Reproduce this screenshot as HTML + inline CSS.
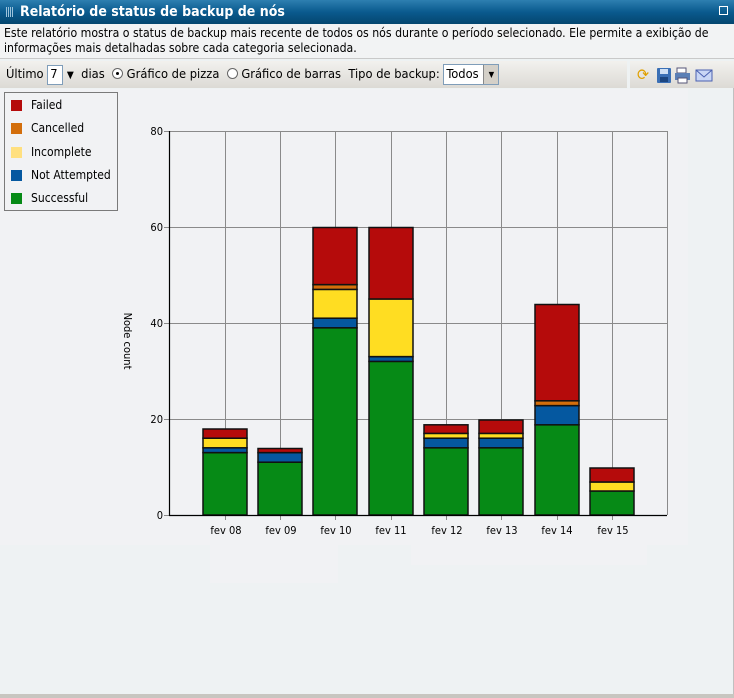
<!DOCTYPE html>
<html><head><meta charset="utf-8"><style>
*{margin:0;padding:0;box-sizing:border-box}
body{width:734px;height:698px;overflow:hidden;background:#eef2f3;font-family:Tahoma,"DejaVu Sans","Liberation Sans",sans-serif;font-size:12px;color:#000;position:relative}
.title{position:absolute;left:0;top:0;width:734px;height:24px;background:linear-gradient(#2d7fb0,#0a5a8e 50%,#04466f);color:#fff;font-weight:bold;font-size:14px;line-height:24px;padding-left:20px;font-family:"DejaVu Sans Condensed","DejaVu Sans",sans-serif}
.desc{position:absolute;left:0;top:24px;width:734px;height:35px;background:#f2f3f4;border-bottom:1px solid #c9c9c9;padding:2px 4px;font-size:12.2px;line-height:15px;font-family:"DejaVu Sans Condensed","DejaVu Sans",sans-serif;white-space:nowrap}
.tb{position:absolute;top:61px;height:27px;background:linear-gradient(#f2f1ee,#dcdad5);font-size:12.8px;font-family:"DejaVu Sans Condensed","DejaVu Sans",sans-serif;line-height:27px;white-space:nowrap}
.chartbg{position:absolute;left:0;top:89px;width:688px;height:456px;background:#f1f2f4}
.legend{position:absolute;left:4px;top:92px;width:114px;height:119px;border:1px solid #7a7a7a;background:#f1f2f4;font-size:12px;font-family:"DejaVu Sans Condensed","DejaVu Sans",sans-serif;padding-top:1px}
.legend div{height:23.25px;line-height:23px;padding-left:26px;position:relative}
.legend span{position:absolute;left:6px;top:6px;width:11px;height:11px}
</style></head><body>
<div class="title"><span style="position:absolute;left:6px;top:7px;width:8px;height:10px;background:repeating-linear-gradient(90deg,#9cc3dc 0 1px,transparent 1px 2px)"></span>Relatório de status de backup de nós
<span style="position:absolute;right:6px;top:6px;width:9px;height:9px;border:1px solid #fff"></span></div>
<div class="desc">Este relatório mostra o status de backup mais recente de todos os nós durante o período selecionado. Ele permite a exibição de<br>informações mais detalhadas sobre cada categoria selecionada.</div>
<div class="tb" style="left:0;width:627px;padding-left:6px">Último <span style="display:inline-block;width:16px;height:20px;border:1px solid #7f9db9;background:#fff;line-height:18px;vertical-align:middle;padding-left:2px">7</span> <span style="font-size:10px">▼</span>&nbsp; dias &nbsp;<span style="display:inline-block;width:11px;height:11px;border-radius:50%;border:1px solid #666;background:#fff;vertical-align:-1px;position:relative"><span style="position:absolute;left:3px;top:3px;width:3px;height:3px;border-radius:50%;background:#000"></span></span> Gráfico de pizza &nbsp;<span style="display:inline-block;width:11px;height:11px;border-radius:50%;border:1px solid #666;background:#fff;vertical-align:-1px"></span> Gráfico de barras &nbsp;Tipo de backup: <span style="display:inline-block;width:56px;height:21px;border:1px solid #7f9db9;background:#fff;line-height:19px;vertical-align:middle;padding-left:2px;position:relative">Todos<span style="position:absolute;right:0;top:0;width:15px;height:19px;background:#d4d0c8;border-left:1px solid #888;font-size:8px;text-align:center;line-height:19px">▼</span></span></div>
<div class="tb" style="left:630px;width:104px">
<svg width="104" height="27" style="position:absolute;left:0;top:0">
<text x="7" y="19" font-size="16" fill="#e0a000">⟳</text>
<rect x="27" y="7" width="14" height="15" fill="#3a6fb5" rx="1"/><rect x="30" y="8" width="8" height="5" fill="#cfe0f5"/><rect x="30" y="16" width="8" height="5" fill="#1c4680"/>
<rect x="47" y="7" width="9" height="5" fill="#fff" stroke="#557"/><rect x="45" y="12" width="15" height="7" fill="#5b7fb5"/><rect x="48" y="17" width="9" height="5" fill="#fff" stroke="#557"/>
<rect x="66" y="9" width="16" height="11" fill="#c9d6f5" stroke="#4a60b0"/><path d="M66 9 L74 16 L82 9" fill="none" stroke="#4a60b0"/>
</svg></div>
<div class="chartbg"></div>
<div style="position:absolute;left:210px;top:545px;width:128px;height:38px;background:#f1f2f4"></div>
<div style="position:absolute;left:411px;top:545px;width:236px;height:20px;background:#f1f2f4"></div>
<div class="legend">
<div><span style="background:#b50b0b"></span>Failed</div>
<div><span style="background:#d36e0c"></span>Cancelled</div>
<div><span style="background:#ffe080"></span>Incomplete</div>
<div><span style="background:#0558a0"></span>Not Attempted</div>
<div><span style="background:#068a16"></span>Successful</div>
</div>
<svg width="734" height="698" style="position:absolute;left:0;top:0" font-family="DejaVu Sans Condensed,DejaVu Sans,sans-serif" font-size="11">
<g stroke="#8a8a8a" stroke-width="1">
<line x1="170" y1="131.5" x2="667" y2="131.5"/><line x1="170" y1="227.5" x2="667" y2="227.5"/><line x1="170" y1="323.5" x2="667" y2="323.5"/><line x1="170" y1="419.5" x2="667" y2="419.5"/>
<line x1="225.5" y1="131" x2="225.5" y2="520"/><line x1="280.5" y1="131" x2="280.5" y2="520"/><line x1="335.5" y1="131" x2="335.5" y2="520"/><line x1="391.5" y1="131" x2="391.5" y2="520"/><line x1="446.5" y1="131" x2="446.5" y2="520"/><line x1="501.5" y1="131" x2="501.5" y2="520"/><line x1="557.5" y1="131" x2="557.5" y2="520"/><line x1="612.5" y1="131" x2="612.5" y2="520"/><line x1="667.5" y1="131" x2="667.5" y2="515"/>
<line x1="164" y1="131.5" x2="170" y2="131.5"/><line x1="164" y1="227.5" x2="170" y2="227.5"/><line x1="164" y1="323.5" x2="170" y2="323.5"/><line x1="164" y1="419.5" x2="170" y2="419.5"/><line x1="164" y1="515.5" x2="170" y2="515.5"/>
</g>
<g stroke="#111" stroke-width="1.5">
<rect x="203" y="452.6" width="44" height="62.4" fill="#068a16"/><rect x="203" y="447.8" width="44" height="4.8" fill="#0558a0"/><rect x="203" y="438.2" width="44" height="9.6" fill="#ffdd22"/><rect x="203" y="429" width="44" height="9.2" fill="#b50b0b"/>
<rect x="258" y="462.2" width="44" height="52.8" fill="#068a16"/><rect x="258" y="452.6" width="44" height="9.6" fill="#0558a0"/><rect x="258" y="448.5" width="44" height="4.1" fill="#b50b0b"/>
<rect x="313" y="327.8" width="44" height="187.2" fill="#068a16"/><rect x="313" y="318.2" width="44" height="9.6" fill="#0558a0"/><rect x="313" y="289.4" width="44" height="28.8" fill="#ffdd22"/><rect x="313" y="284.6" width="44" height="4.8" fill="#d36e0c"/><rect x="313" y="227.5" width="44" height="57.1" fill="#b50b0b"/>
<rect x="369" y="361.4" width="44" height="153.6" fill="#068a16"/><rect x="369" y="356.6" width="44" height="4.8" fill="#0558a0"/><rect x="369" y="299" width="44" height="57.6" fill="#ffdd22"/><rect x="369" y="227.5" width="44" height="71.5" fill="#b50b0b"/>
<rect x="424" y="447.8" width="44" height="67.2" fill="#068a16"/><rect x="424" y="438.2" width="44" height="9.6" fill="#0558a0"/><rect x="424" y="433.4" width="44" height="4.8" fill="#ffdd22"/><rect x="424" y="424.8" width="44" height="8.6" fill="#b50b0b"/>
<rect x="479" y="447.8" width="44" height="67.2" fill="#068a16"/><rect x="479" y="438.2" width="44" height="9.6" fill="#0558a0"/><rect x="479" y="433.4" width="44" height="4.8" fill="#ffdd22"/><rect x="479" y="420" width="44" height="13.4" fill="#b50b0b"/>
<rect x="535" y="424.8" width="44" height="90.2" fill="#068a16"/><rect x="535" y="405.6" width="44" height="19.2" fill="#0558a0"/><rect x="535" y="400.8" width="44" height="4.8" fill="#d36e0c"/><rect x="535" y="304.5" width="44" height="96.3" fill="#b50b0b"/>
<rect x="590" y="491" width="44" height="24" fill="#068a16"/><rect x="590" y="482" width="44" height="9" fill="#ffdd22"/><rect x="590" y="468" width="44" height="14" fill="#b50b0b"/>
</g>
<line x1="169.5" y1="131" x2="169.5" y2="516" stroke="#000" stroke-width="1.2"/>
<line x1="169" y1="515.5" x2="667" y2="515.5" stroke="#000" stroke-width="1.2"/>
<g text-anchor="end" fill="#000"><text x="163" y="135">80</text><text x="163" y="231">60</text><text x="163" y="327">40</text><text x="163" y="423">20</text><text x="163" y="519">0</text></g>
<g text-anchor="middle" fill="#000"><text x="226" y="534">fev 08</text><text x="281" y="534">fev 09</text><text x="336" y="534">fev 10</text><text x="391" y="534">fev 11</text><text x="447" y="534">fev 12</text><text x="502" y="534">fev 13</text><text x="557" y="534">fev 14</text><text x="613" y="534">fev 15</text></g>
<text transform="translate(124,341) rotate(90)" text-anchor="middle" fill="#000">Node count</text>
<rect x="0" y="694" width="734" height="4" fill="#c8c6c0"/>
<line x1="733.5" y1="88" x2="733.5" y2="694" stroke="#c0c0c0"/>
</svg>
</body></html>
